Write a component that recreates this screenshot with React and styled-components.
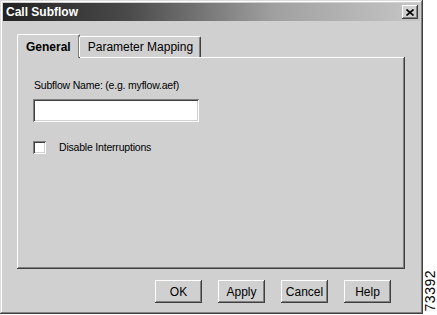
import styled, { createGlobalStyle } from 'styled-components';

const Global = createGlobalStyle`
    html, body {
        margin: 0;
        padding: 0;
        background: #ffffff;
    }
    body {
        font-family: 'Liberation Sans', Arial, sans-serif;
        font-size: 11px;
        color: #000;
    }
`;

const Page = styled.div`
    display: flex;
    width: 437px;
    height: 315px;
`;

const Dialog = styled.div`
    width: 423px;
    height: 314px;
    box-sizing: border-box;
    padding: 3px;
    background: #d0d0d0;
    display: flex;
    flex-direction: column;
    box-shadow: inset -1px -1px #404040, inset 1px 1px #dcdcdc,
        inset -2px -2px #808080, inset 2px 2px #ffffff;
`;

const TitleBar = styled.div`
    height: 18px;
    display: flex;
    align-items: center;
    justify-content: space-between;
    padding: 0 2px 0 3px;
    background: linear-gradient(to right, #222222 0%, #4a4a4a 30%, #a0a0a0 65%, #c6c6c6 100%);
`;

const Title = styled.span`
    color: #fff;
    font-weight: bold;
    font-size: 12px;
`;

const CloseBtn = styled.div`
    width: 16px;
    height: 14px;
    box-sizing: border-box;
    background: #d0d0d0;
    display: flex;
    align-items: center;
    justify-content: center;
    box-shadow: inset -1px -1px #404040, inset 1px 1px #ffffff,
        inset -2px -2px #808080;
`;

const Body = styled.div`
    padding: 13px 0 0 14px;
    display: flex;
    flex-direction: column;
`;

const TabRow = styled.div`
    display: flex;
    align-items: flex-end;
    height: 23px;
    position: relative;
    z-index: 1;
`;

const Tab = styled.div`
    box-sizing: border-box;
    height: ${(p) => (p.$active ? '24px' : '21px')};
    padding: ${(p) => (p.$active ? '0 8px' : '0 7px 0 8px')};
    margin-bottom: ${(p) => (p.$active ? '-1px' : '0')};
    margin-left: ${(p) => (p.$active ? '0' : '-1px')};
    display: flex;
    align-items: center;
    font-weight: ${(p) => (p.$active ? 'bold' : 'normal')};
    font-size: 12px;
    background: #d0d0d0;
    border-top: 1px solid #ffffff;
    border-left: 1px solid #ffffff;
    border-right: 1px solid #404040;
    box-shadow: inset -1px 0 #808080;
    border-radius: 2px 2px 0 0;
`;

const Panel = styled.div`
    width: 388px;
    height: 212px;
    box-sizing: border-box;
    padding: 21px 16px 0 16px;
    display: flex;
    flex-direction: column;
    box-shadow: inset -1px -1px #404040, inset 1px 1px #ffffff,
        inset -2px -2px #808080;
`;

const SmallText = styled.span`
    font-size: 10.5px;
    letter-spacing: -0.2px;
    line-height: 14px;
`;

const Label = styled(SmallText)`
    display: block;
    padding-left: 1px;
`;

const TextInput = styled.div`
    margin-top: 7px;
    width: 166px;
    height: 23px;
    box-sizing: border-box;
    background: #ffffff;
    box-shadow: inset 1px 1px #808080, inset -1px -1px #ffffff,
        inset 2px 2px #404040, inset -2px -2px #d0d0d0;
`;

const CheckRow = styled.div`
    margin-top: 18px;
    display: flex;
    align-items: center;
    gap: 13px;
`;

const Check = styled.div`
    width: 13px;
    height: 13px;
    box-sizing: border-box;
    background: #ffffff;
    box-shadow: inset 1px 1px #808080, inset -1px -1px #ffffff,
        inset 2px 2px #404040, inset -2px -2px #d0d0d0;
`;

const ButtonRow = styled.div`
    margin-top: 11px;
    display: flex;
    justify-content: flex-end;
    gap: 16px;
    padding-right: 29px;
`;

const Button = styled.div`
    width: 47px;
    height: 23px;
    box-sizing: border-box;
    display: flex;
    align-items: center;
    justify-content: center;
    font-size: 12px;
    background: #d0d0d0;
    box-shadow: inset -1px -1px #404040, inset 1px 1px #ffffff,
        inset -2px -2px #808080;
`;

const Side = styled.div`
    flex: 1;
    display: flex;
    flex-direction: column;
    justify-content: flex-end;
    align-items: center;
    padding-bottom: 4px;
`;

const FigNum = styled.span`
    writing-mode: vertical-rl;
    transform: rotate(180deg);
    font-size: 14px;
    line-height: 14px;
    letter-spacing: 0.5px;
`;

export default function App() {
    return (
        <Page>
            <Global />
            <Dialog>
                <TitleBar>
                    <Title>Call Subflow</Title>
                    <CloseBtn>
                        <svg width="8" height="7" viewBox="0 0 8 7">
                            <path d="M0.5 0.5 L7.5 6.5 M7.5 0.5 L0.5 6.5" stroke="#000" strokeWidth="1.6" />
                        </svg>
                    </CloseBtn>
                </TitleBar>
                <Body>
                    <TabRow>
                        <Tab $active>General</Tab>
                        <Tab>Parameter Mapping</Tab>
                    </TabRow>
                    <Panel>
                        <Label>Subflow Name: (e.g. myflow.aef)</Label>
                        <TextInput />
                        <CheckRow>
                            <Check />
                            <SmallText>Disable Interruptions</SmallText>
                        </CheckRow>
                    </Panel>
                    <ButtonRow>
                        <Button>OK</Button>
                        <Button>Apply</Button>
                        <Button>Cancel</Button>
                        <Button>Help</Button>
                    </ButtonRow>
                </Body>
            </Dialog>
            <Side>
                <FigNum>73392</FigNum>
            </Side>
        </Page>
    );
}
